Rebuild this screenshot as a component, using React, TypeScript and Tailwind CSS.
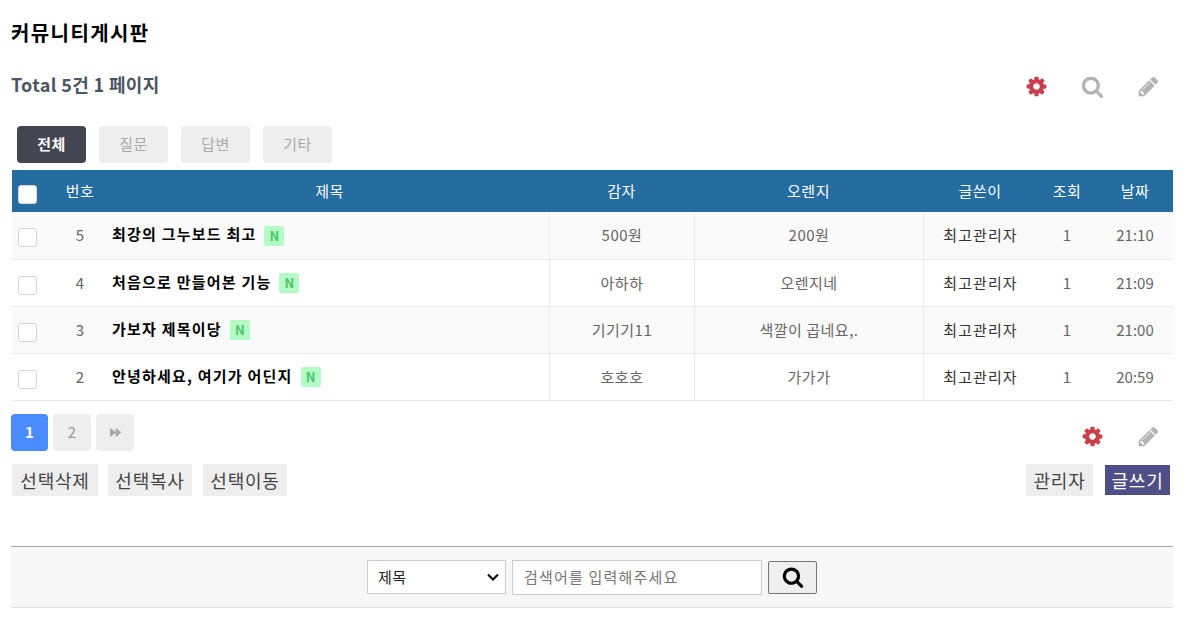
import { FaForward } from "react-icons/fa";

const rows = [
  { num: 5, title: "최강의 그누보드 최고", potato: "500원", orange: "200원", date: "21:10" },
  { num: 4, title: "처음으로 만들어본 기능", potato: "아하하", orange: "오렌지네", date: "21:09" },
  { num: 3, title: "가보자 제목이당", potato: "기기기11", orange: "색깔이 곱네요,.", date: "21:00" },
  { num: 2, title: "안녕하세요, 여기가 어딘지", potato: "호호호", orange: "가가가", date: "20:59" },
];

const rowGrid = "grid grid-cols-[38px_60px_439px_145px_229px_114px_60px_76px]";

function CogIcon() {
  return (
    <svg viewBox="0 0 1792 1792" className="w-[23px] h-[23px]" fill="#c9404b">
      <path d="M1152 896q0-106-75-181t-181-75-181 75-75 181 75 181 181 75 181-75 75-181zm512-109v222q0 12-8 23t-20 13l-185 28q-19 54-39 91 35 50 107 138 10 12 10 25t-9 23q-27 37-99 108t-94 71q-12 0-26-9l-138-108q-44 23-91 38-16 136-29 186-7 28-36 28h-222q-14 0-24.5-8.5t-11.5-21.5l-28-184q-49-16-90-37l-141 107q-10 9-25 9-14 0-25-11-126-114-165-168-7-10-7-23 0-12 8-23 15-21 51-66.5t54-70.5q-27-50-41-99l-183-27q-13-2-21-12.5t-8-23.5v-222q0-12 8-23t19-13l186-28q14-46 39-92-40-57-107-138-10-12-10-24 0-10 9-23 26-36 98.5-107.5t94.5-71.5q13 0 26 10l138 107q44-23 91-38 16-136 29-186 7-28 36-28h222q14 0 24.5 8.5t11.5 21.5l28 184q49 16 90 37l142-107q9-9 24-9 13 0 25 10 129 119 165 170 7 8 7 22 0 12-8 23-15 21-51 66.5t-54 70.5q26 50 41 98l183 28q13 2 21 12.5t8 23.5z" />
    </svg>
  );
}

function SearchIcon({ className, color }: { className: string; color: string }) {
  return (
    <svg viewBox="0 0 1792 1792" className={className} fill={color}>
      <path d="M1216 832q0-185-131.5-316.5t-316.5-131.5-316.5 131.5-131.5 316.5 131.5 316.5 316.5 131.5 316.5-131.5 131.5-316.5zm512 832q0 52-38 90t-90 38q-54 0-90-38l-343-342q-179 124-399 124-143 0-273.5-55.5t-225-150-150-225-55.5-273.5 55.5-273.5 150-225 225-150 273.5-55.5 273.5 55.5 225 150 150 225 55.5 273.5q0 220-124 399l343 343q37 37 37 90z" />
    </svg>
  );
}

function PencilIcon() {
  return (
    <svg viewBox="0 0 1792 1792" className="w-[23px] h-[23px]" fill="#b3b3b3">
      <path d="M491 1536l91-91-235-235-91 91v107h128v128h107zm523-928q0-22-22-22-10 0-17 7l-542 542q-7 7-7 17 0 22 22 22 10 0 17-7l542-542q7-7 7-17zm-54-192l416 416-832 832h-416v-416zm683 96q0 53-37 90l-166 166-416-416 166-165q36-38 90-38 53 0 91 38l235 234q37 39 37 91z" />
    </svg>
  );
}

export default function App() {
  return (
    <div className="w-[1193px] h-[639px] overflow-hidden bg-white pl-[11px] pr-5 font-['Noto_Sans_CJK_KR','Noto_Sans',sans-serif] text-[#666]">
      <h1 className="pt-[19px] h-[64px] text-[20px] tracking-[1.4px] leading-[28px] font-bold text-black">커뮤니티게시판</h1>

      <div className="flex items-center justify-between h-[42px]">
        <div className="text-[18px] tracking-[0.35px] font-bold leading-[42px] text-[#4b5563] -mt-[3px]">Total 5건 1 페이지</div>
        <div className="flex items-center gap-[33px] pr-[13px] mt-[2px]">
          <CogIcon />
          <SearchIcon className="w-[23px] h-[23px]" color="#b3b3b3" />
          <PencilIcon />
        </div>
      </div>

      <div className="flex gap-[13px] pl-[6px] pt-[20px] pb-[7px] text-[15px] tracking-[0.5px]">
        <div className="w-[69px] h-[37px] rounded-[4px] bg-[#434650] text-white font-bold flex items-center justify-center">전체</div>
        <div className="w-[69px] h-[37px] rounded-[4px] bg-[#eeeeee] text-[#aaa] flex items-center justify-center">질문</div>
        <div className="w-[69px] h-[37px] rounded-[4px] bg-[#eeeeee] text-[#aaa] flex items-center justify-center">답변</div>
        <div className="w-[69px] h-[37px] rounded-[4px] bg-[#eeeeee] text-[#aaa] flex items-center justify-center">기타</div>
      </div>

      <div className="w-[1161px] ml-[1px] text-[15px]">
        <div className={`${rowGrid} h-[42px] items-center text-center bg-[#256ca0] text-white tracking-[0.5px]`}>
          <div className="flex justify-center pr-[8px] pt-[6px]">
            <span className="block w-[19px] h-[19px] rounded-[3px] bg-white border border-[#d5d5d5]" />
          </div>
          <div>번호</div>
          <div>제목</div>
          <div>감자</div>
          <div>오렌지</div>
          <div>글쓴이</div>
          <div>조회</div>
          <div>날짜</div>
        </div>
        {rows.map((row, i) => (
          <div key={row.num} className={`${rowGrid} ${i === 0 ? "h-[48px]" : "h-[47px]"} items-stretch text-center border-b border-[#eaeaea] ${i % 2 === 0 ? "bg-[#fafafa]" : "bg-white"}`}>
            <div className="flex items-center justify-center pr-[8px] pt-[4px]">
              <span className="block w-[19px] h-[19px] rounded-[3px] bg-white border border-[#d5d5d5]" />
            </div>
            <div className="flex items-center justify-center">{row.num}</div>
            <div className="flex items-center pl-[2px] text-left">
              <span className="font-bold text-black text-[15px] tracking-[1.22px] -mt-[2px]">{row.title}</span>
              <span className="ml-[8px] w-[20px] h-[20px] rounded-[2px] bg-[#b5fbc6] text-[#4cc66d] text-[13px] font-bold flex items-center justify-center">N</span>
            </div>
            <div className="flex items-center justify-center border-l border-[#eaeaea] tracking-[0.5px]">{row.potato}</div>
            <div className="flex items-center justify-center border-l border-[#eaeaea] tracking-[0.5px]">{row.orange}</div>
            <div className="flex items-center justify-center border-l border-[#eaeaea] text-[#333] tracking-[1.1px]">최고관리자</div>
            <div className="flex items-center justify-center">1</div>
            <div className="flex items-center justify-center">{row.date}</div>
          </div>
        ))}
      </div>

      <div className="flex items-start justify-between pt-[13px] h-[62px]">
        <div className="flex gap-[5px]">
          <div className="w-[37px] h-[37px] rounded-[4px] bg-[#4a8cff] text-white font-bold text-[15px] flex items-center justify-center">1</div>
          <div className="w-[38px] h-[37px] rounded-[4px] bg-[#eeeeee] text-[#999] text-[15px] flex items-center justify-center">2</div>
          <div className="w-[38px] h-[37px] rounded-[4px] bg-[#eeeeee] text-[#aaa] flex items-center justify-center"><FaForward className="w-[11px] h-[11px]" /></div>
        </div>
        <div className="flex items-center gap-[33px] pr-[13px] mt-[11px]">
          <CogIcon />
          <PencilIcon />
        </div>
      </div>

      <div className="flex justify-between pl-[1px] pr-[3px] pt-[1px] text-[18px] tracking-[0.8px] text-[#444]">
        <div className="flex">
          <div className="w-[86px] h-[32px] bg-[#eeeeee] flex items-center justify-center">선택삭제</div>
          <div className="ml-[10px] w-[84px] h-[32px] bg-[#eeeeee] flex items-center justify-center">선택복사</div>
          <div className="ml-[11px] w-[84px] h-[32px] bg-[#eeeeee] flex items-center justify-center">선택이동</div>
        </div>
        <div className="flex items-center gap-[12px]">
          <div className="w-[67px] h-[32px] bg-[#eeeeee] flex items-center justify-center">관리자</div>
          <div className="w-[65px] h-[30px] bg-[#4f4f87] text-white flex items-center justify-center">글쓰기</div>
        </div>
      </div>

      <div className="mt-[50px] w-[1162px] h-[62px] bg-[#f7f7f7] border-t border-[#aaaaaa] border-b-[#e0e0e0] border-b flex items-center justify-center gap-[6px] text-[15px]">
        <div className="w-[139px] h-[34px] bg-white border border-[#ccc] flex items-center justify-between pl-[10px] pr-[6px] text-[#222] tracking-[0.5px]">
          <span>제목</span>
          <svg viewBox="0 0 12 8" className="w-[12px] h-[8px]" fill="none" stroke="#111" strokeWidth="2.2"><path d="M1 1.5l5 5 5-5" /></svg>
        </div>
        <div className="w-[250px] h-[35px] bg-white border border-[#ccc] flex items-center pl-[11px] text-[#777] tracking-[1.2px]">검색어를 입력해주세요</div>
        <div className="w-[49px] h-[33px] bg-[#efefef] border border-[#767676] rounded-[2px] flex items-center justify-center">
          <SearchIcon className="w-[22px] h-[22px]" color="#000" />
        </div>
      </div>
    </div>
  );
}
